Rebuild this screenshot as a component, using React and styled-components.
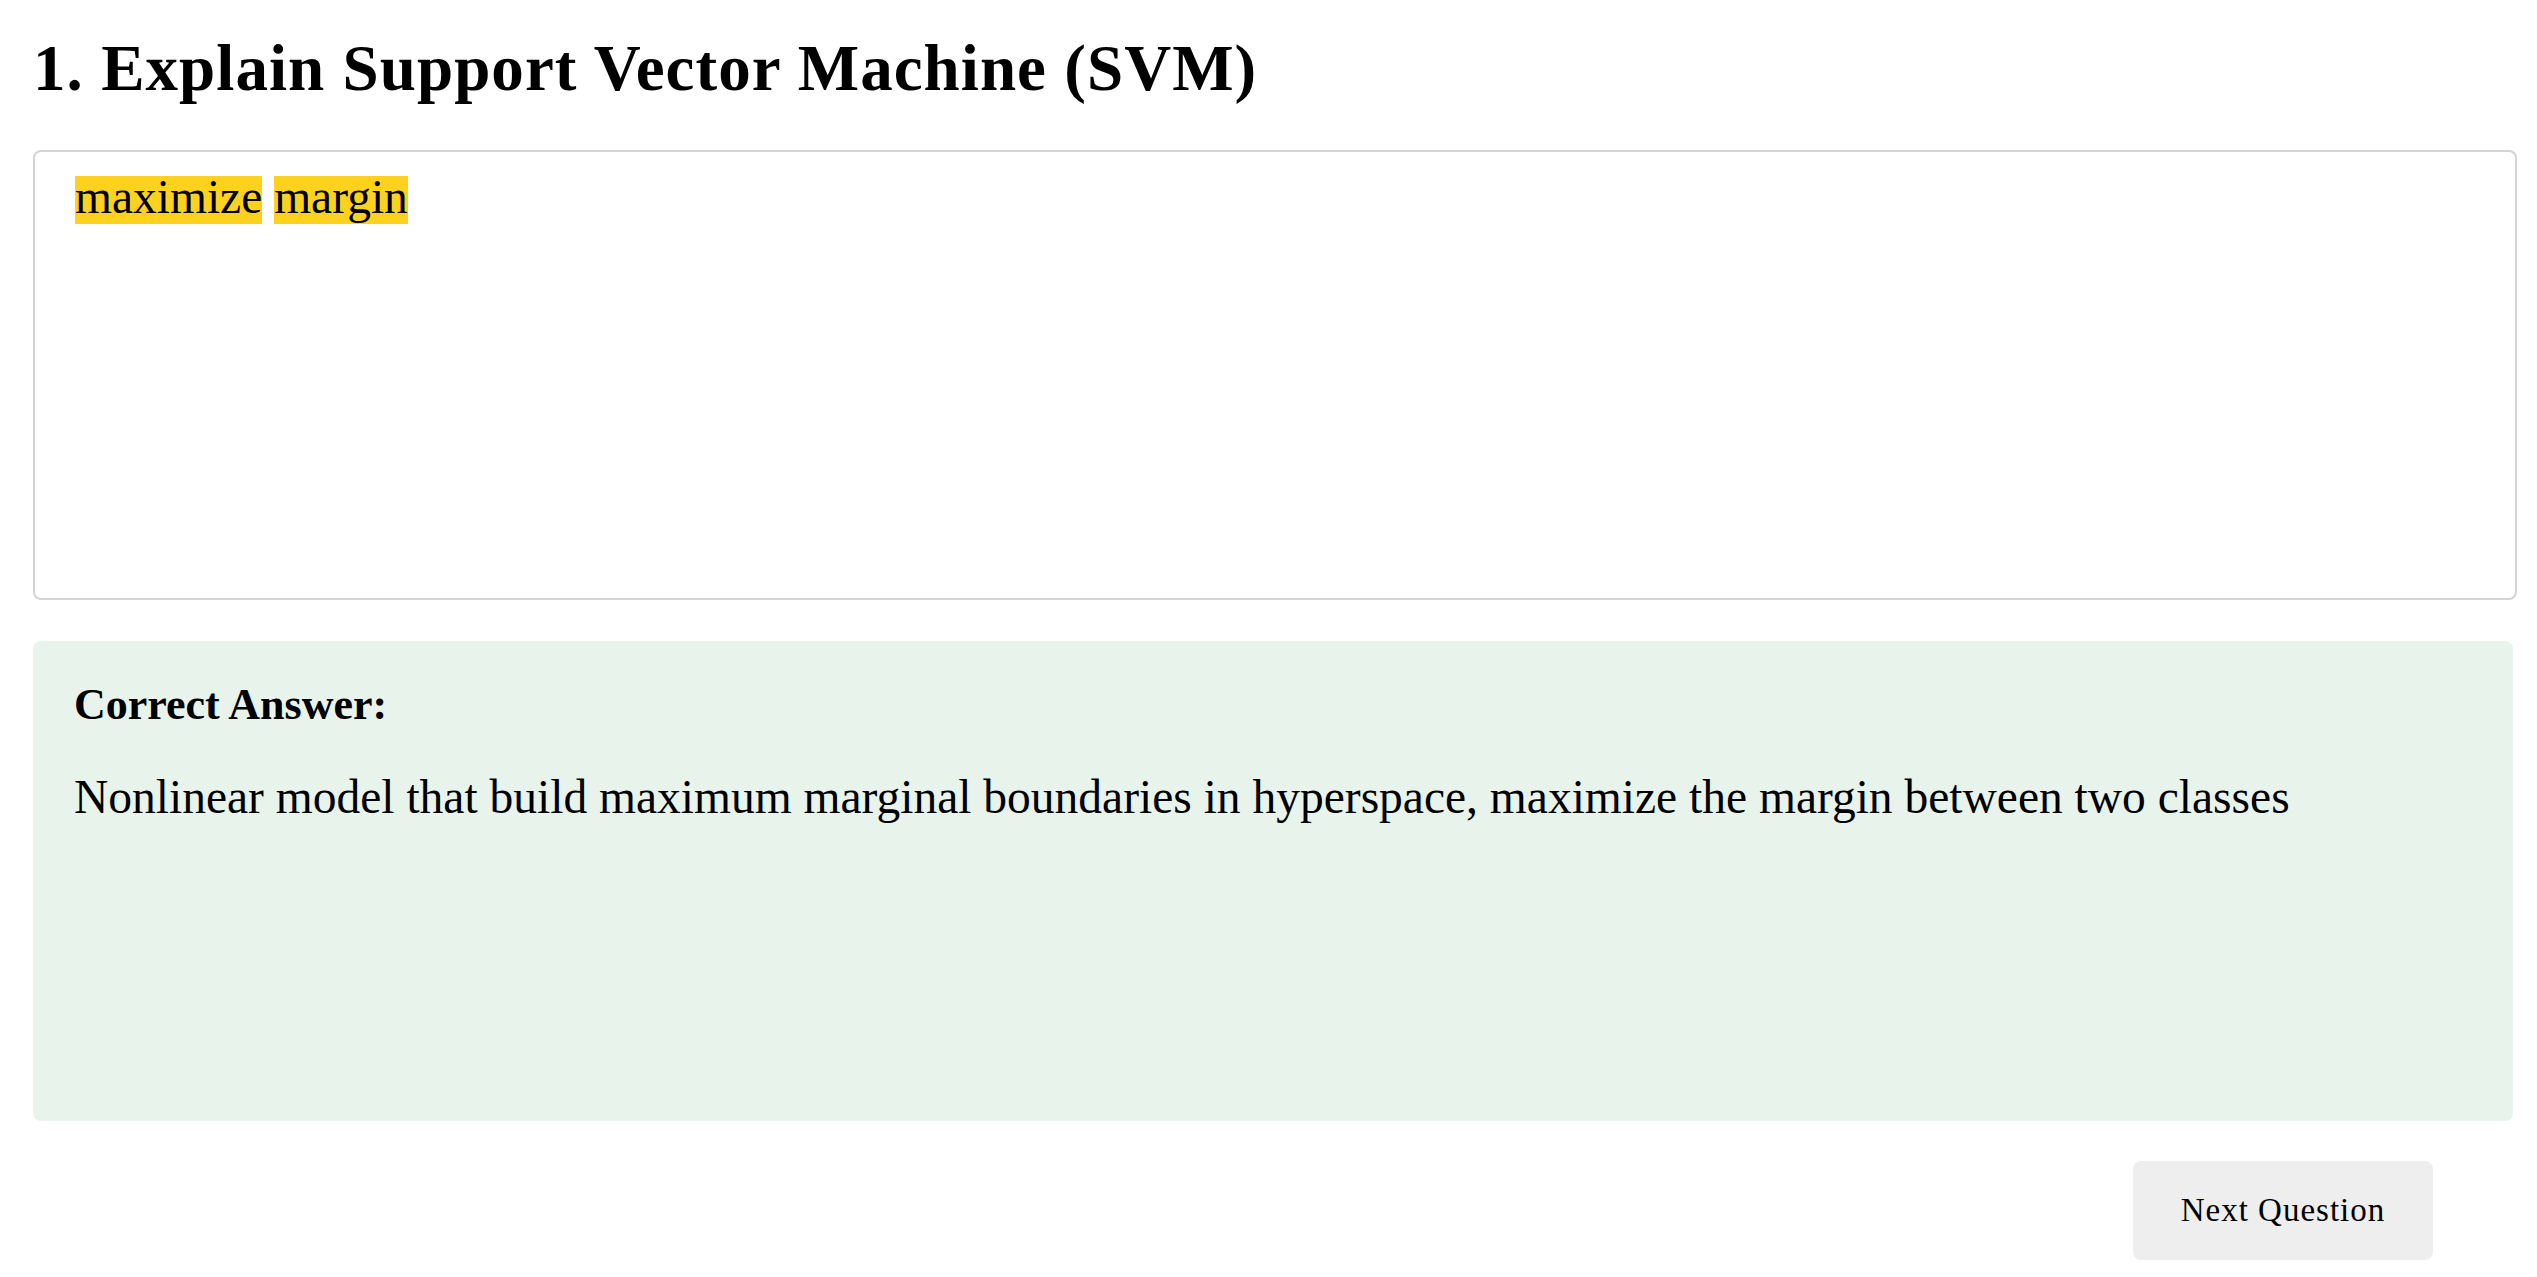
import styled, { createGlobalStyle } from 'styled-components';

const GlobalStyle = createGlobalStyle`
body {
    margin: 0;
    background-color: #ffffff;
    font-family: "Liberation Serif", "Times New Roman", serif;
    color: #000000;
}
`

const Page = styled.div`
padding: 32px 20px 40px 33px;
display: flex;
flex-direction: column;
`

const Title = styled.h1`
margin: 0;
font-size: 65px;
line-height: 72px;
font-weight: 700;
letter-spacing: 1.05px;
`

const AnswerBox = styled.div`
margin-top: 46px;
height: 450px;
box-sizing: border-box;
border: 2px solid #d4d4d4;
border-radius: 8px;
padding: 21px 40px;
font-size: 47.5px;
line-height: 48px;
`

const Highlight = styled.span`
display: inline-block;
background-color: #fdd21f;
line-height: 42px;
padding-bottom: 6px;
`

const SolutionCard = styled.div`
margin-top: 41px;
margin-right: 4px;
height: 480px;
box-sizing: border-box;
background-color: #e8f3ec;
border-radius: 8px;
padding: 38px 41px;
`

const SolutionLabel = styled.div`
font-size: 44px;
line-height: 52px;
font-weight: 700;
`

const SolutionText = styled.p`
margin: 38px 0 0 0;
font-size: 47.5px;
line-height: 56px;
`

const Footer = styled.div`
margin-top: 40px;
display: flex;
justify-content: flex-end;
padding-right: 84px;
`

const NextButton = styled.button`
width: 300px;
height: 99px;
border: none;
border-radius: 8px;
background-color: #eeeeee;
font-family: "Liberation Serif", "Times New Roman", serif;
font-size: 33px;
letter-spacing: 1px;
color: #000000;
display: flex;
align-items: center;
justify-content: center;
padding: 0;
cursor: pointer;
`

function App() {
    return (
        <>
            <GlobalStyle />
            <Page>
                <Title>1. Explain Support Vector Machine (SVM)</Title>
                <AnswerBox>
                    <Highlight>maximize</Highlight> <Highlight>margin</Highlight>
                </AnswerBox>
                <SolutionCard>
                    <SolutionLabel>Correct Answer:</SolutionLabel>
                    <SolutionText>
                        Nonlinear model that build maximum marginal boundaries in hyperspace, maximize the margin between two classes
                    </SolutionText>
                </SolutionCard>
                <Footer>
                    <NextButton>Next Question</NextButton>
                </Footer>
            </Page>
        </>
    )
}

export default App;
